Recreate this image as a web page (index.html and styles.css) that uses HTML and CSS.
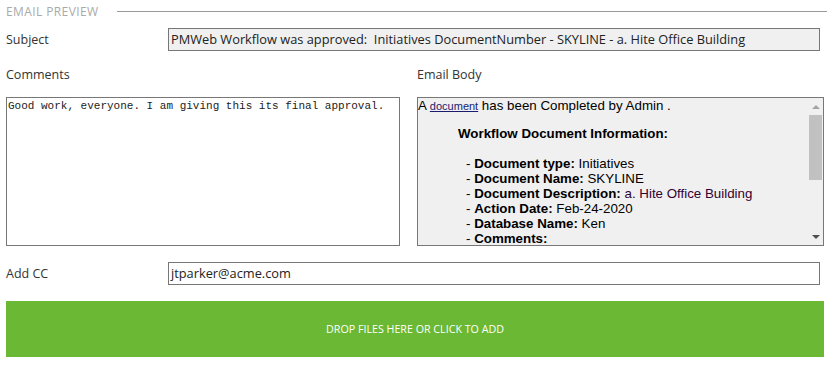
FILE: index.html
```html
<!DOCTYPE html>
<html lang="en">
<head>
  <meta charset="UTF-8" />
  <title>Email Preview</title>
  <link rel="stylesheet" href="styles.css">
</head>
<body>
  <div class="page">
    <div class="section-head">
      <span class="section-title">EMAIL PREVIEW</span>
      <span class="section-line"></span>
    </div>

    <div class="row">
      <label class="row-label">Subject</label>
      <div class="field readonly">PMWeb Workflow was approved:&nbsp; Initiatives DocumentNumber - SKYLINE - a. Hite Office Building</div>
    </div>

    <div class="columns">
      <div class="col">
        <div class="col-label">Comments</div>
        <div class="comments">Good work, everyone. I am giving this its final approval.</div>
      </div>
      <div class="col">
        <div class="col-label">Email Body</div>
        <div class="email-body">
          <div class="email-content">
            <p class="intro">A <a href="#" class="doc-link">document</a> has been Completed by Admin .</p>
            <div class="info">
              <div class="info-title">Workflow Document Information:</div>
              <ul class="info-list">
                <li>- <b>Document type:</b> Initiatives</li>
                <li>- <b>Document Name:</b> SKYLINE</li>
                <li>- <b>Document Description:</b> <span class="val">a. Hite Office Building</span></li>
                <li>- <b>Action Date:</b> Feb-24-2020</li>
                <li>- <b>Database Name:</b> Ken</li>
                <li>- <b>Comments:</b></li>
              </ul>
            </div>
          </div>
          <div class="scrollbar">
            <div class="sb-btn"><span class="arrow-up"></span></div>
            <div class="sb-track"><div class="sb-thumb"></div></div>
            <div class="sb-btn"><span class="arrow-down"></span></div>
          </div>
        </div>
      </div>
    </div>

    <div class="row cc-row">
      <label class="row-label">Add CC</label>
      <div class="field">jtparker@acme.com</div>
    </div>

    <div class="dropzone">DROP FILES HERE OR CLICK TO ADD</div>
  </div>
</body>
</html>
```

FILE: styles.css
```css
body {
  margin: 0;
  font-family: 'Open Sans', sans-serif;
  color: #333;
  background: #fff;
}

.page {
  padding: 0 9px 0 6px;
}

.section-head {
  display: flex;
  align-items: center;
  height: 22px;
}

.section-title {
  font-size: 12px;
  color: #aaa;
  letter-spacing: 0.4px;
}

.section-line {
  flex: 1;
  height: 1px;
  background: #999;
  margin: 0 -3px 0 18px;
}

.row {
  display: flex;
  align-items: center;
  margin-top: 6px;
  padding-right: 4px;
}

.row-label {
  width: 162px;
  font-size: 12.5px;
}

.field {
  flex: 1;
  height: 23px;
  box-sizing: border-box;
  border: 1px solid #777;
  padding: 0 2px;
  font-size: 12.8px;
  line-height: 21px;
  color: #222;
  white-space: nowrap;
  overflow: hidden;
}

.field.readonly {
  background: #f0f0f0;
}

.columns {
  display: grid;
  grid-template-columns: 394px 407px;
  column-gap: 17px;
}

.col-label {
  font-size: 12.5px;
  margin: 15px 0 13px;
  height: 18px;
  line-height: 18px;
}

.comments {
  height: 149px;
  box-sizing: border-box;
  border: 1px solid #777;
  padding: 1px 1px;
  font-family: 'Liberation Mono', monospace;
  font-size: 11px;
  line-height: 15px;
  color: #222;
}

.email-body {
  height: 149px;
  box-sizing: border-box;
  border: 1px solid #777;
  background: #f0f0f0;
  display: flex;
}

.email-content {
  flex: 1;
  overflow: hidden;
  font-family: 'Liberation Sans', Arial, sans-serif;
  font-size: 13.33px;
  line-height: 15px;
  color: #000;
}

.intro {
  margin: 0;
}

.doc-link {
  font-size: 11px;
  color: #1a1a6e;
}

.info {
  padding: 12px 0 0 40px;
}

.info-title {
  font-weight: bold;
  margin-bottom: 15px;
}

.info-list {
  list-style: none;
  margin: 0;
  padding: 0 0 0 8px;
}

.val {
  color: #330033;
}

.scrollbar {
  width: 15px;
  display: flex;
  flex-direction: column;
}

.sb-btn {
  height: 17px;
  display: flex;
  align-items: center;
  justify-content: center;
}

.arrow-up {
  border-left: 4px solid transparent;
  border-right: 4px solid transparent;
  border-bottom: 4px solid #a3a3a3;
}

.arrow-down {
  border-left: 4px solid transparent;
  border-right: 4px solid transparent;
  border-top: 4px solid #505050;
}

.sb-track {
  flex: 1;
  padding: 0 1px;
}

.sb-thumb {
  height: 65px;
  background: #c1c1c1;
}

.cc-row {
  margin-top: 16px;
}

.dropzone {
  margin-top: 16px;
  height: 56px;
  background: #6ab833;
  color: #fff;
  font-size: 10.7px;
  display: flex;
  align-items: center;
  justify-content: center;
}
```
